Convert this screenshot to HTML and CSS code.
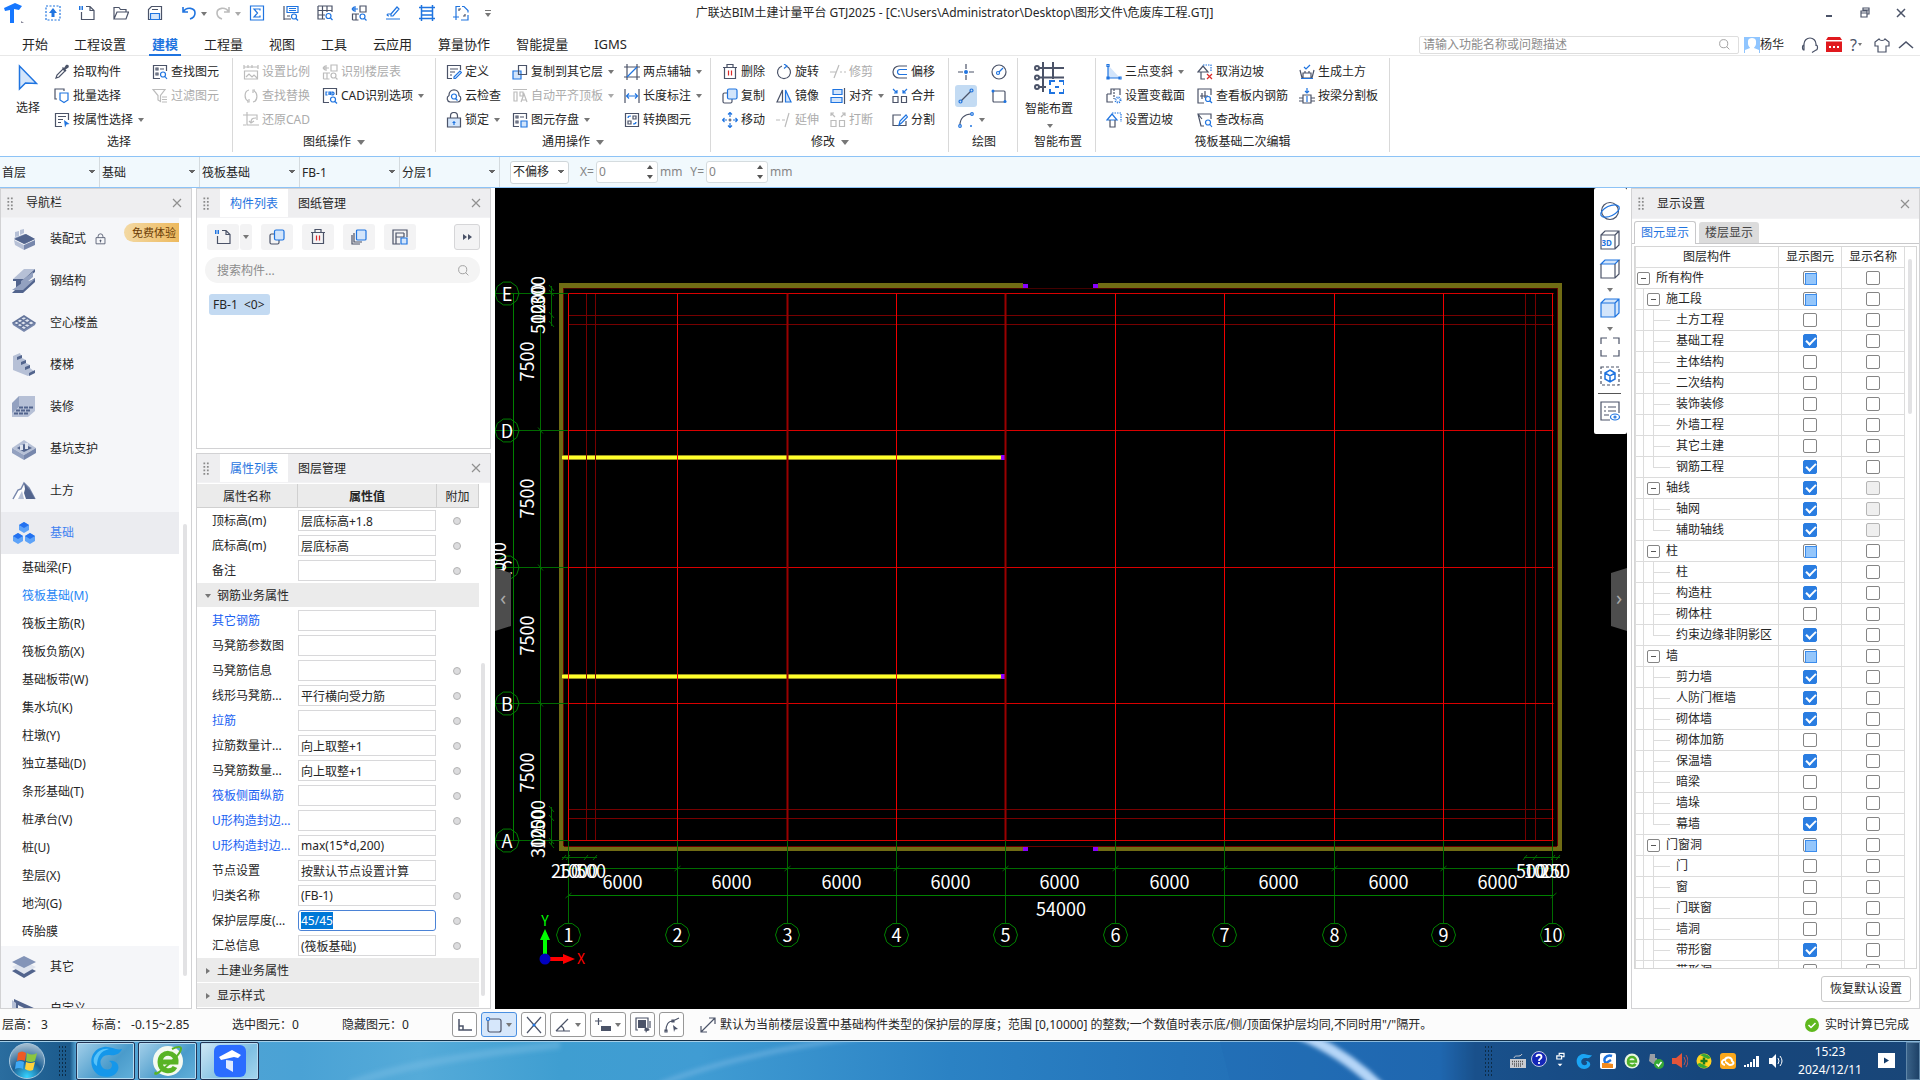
FILE: index.html
```html
<!DOCTYPE html>
<html lang="zh-CN">
<head>
<meta charset="utf-8">
<title>广联达BIM土建计量平台 GTJ2025</title>
<link rel="stylesheet" href="styles.css">
</head>
<body>
<svg class="sprite" aria-hidden="true">
  <symbol id="up" viewBox="0 0 16 16"><path class="b" stroke-dasharray="2 1.5" d="M1 1h14v14H1z"/><path class="bs" d="M8 3l4 5h-2.500v4h-3V8H4z"/></symbol>
  <symbol id="new" viewBox="0 0 16 16"><path d="M7 1.500h4l4 4v9H2.500V7M11 1.500v4h4"/><path class="b" stroke-dasharray="1.500 1" stroke-width="4" d="M0 3h5"/></symbol>
  <symbol id="open" viewBox="0 0 16 16"><path d="M1 14V2.500h5l1.500 2H13V7M1 14l3-7h11.500L13 14z"/></symbol>
  <symbol id="save" viewBox="0 0 16 16"><path d="M1.500 14.500v-10l3-3h10v13zM5 4.500h6"/><path class="bf" d="M3.500 14.500v-6h9v6z"/></symbol>
  <symbol id="undo" viewBox="0 0 16 16"><path class="b" stroke-width="1.600" d="M2 2v5h5M2 7c4-6 12-4 12 1 0 3-2 5-5 6"/></symbol>
  <symbol id="redo" viewBox="0 0 16 16"><path class="b" stroke-width="1.600" d="M14 2v5H9M14 7C10 1 2 3 2 8c0 3 2 5 5 6"/></symbol>
  <symbol id="sum" viewBox="0 0 16 16"><path class="b" d="M1.500 1h13v14h-13zM11 5.500V4H5l3.500 4L5 12h6v-1.500"/></symbol>
  <symbol id="q1" viewBox="0 0 16 16"><path d="M1 1v14M1 14h7M4 11h3"/><path class="b" d="M4 1.500h11v6H4zM6 3.500h7M6 5.500h7"/><circle class="b" cx="11" cy="11.500" r="2.500"/><path class="b" d="M13 13.500l2 2"/></symbol>
  <symbol id="q2" viewBox="0 0 16 16"><path d="M1 1h14v6M1 1v13h7M1 5.500h14M1 10h7M5.500 1v13M10 1v6"/><circle class="b" cx="11.500" cy="11" r="2.500"/><path class="b" d="M13.500 13l2 2"/></symbol>
  <symbol id="q3" viewBox="0 0 16 16"><path d="M9 1h6v6H9zM1.500 15V9H8M1.500 15h6M5 9v6"/><circle class="b" cx="11.500" cy="11.500" r="2.500"/><path class="b" d="M13.500 13.500l2 2M1 4h6M4 1v6M1 4l2-2M1 4l2 2"/></symbol>
  <symbol id="pen" viewBox="0 0 16 16"><path class="b" d="M6 9l6-7 2 2-6 7H6zM6 9H3c-2 1 0 2 1 2M1 14h14"/></symbol>
  <symbol id="rail" viewBox="0 0 16 16"><path class="b" stroke-width="1.500" d="M2.500 0v16M13.500 0v16M0 2.500h16M2.500 6h11M2.500 10h11M0 13.500h16"/></symbol>
  <symbol id="frame" viewBox="0 0 16 16"><path class="b" d="M3 9V1.500h4M9 1.500h2l4 4v2M15 10v5H8M0 12h6M3 9v6"/><path d="M6 6V4h2M12 9v2h-2"/></symbol>
  <symbol id="pick" viewBox="0 0 16 16"><path d="M2 14l1-3 6-6 2 2-6 6z"/><path class="ds" d="M8 4l1-1 1 1 2-3c2-1 3.500.5 2.500 2.500l-3 2 1 1-1 1z"/></symbol>
  <symbol id="batch" viewBox="0 0 16 16"><path d="M3 11H1V1h9v2"/><path class="b" d="M6 5h8v7l-4 2.500L6 12z"/></symbol>
  <symbol id="attr" viewBox="0 0 16 16"><path d="M8 14.500H1.500v-13h13V8M4 4.500h8M4 7.500h5M4 10.500h3"/><path class="bs" d="M10 8l5.500 4-3 .5-1.500 3z"/></symbol>
  <symbol id="find" viewBox="0 0 16 16"><path d="M8 14.500H1.500v-13h13V7M4 4h2v2H4zM8 5h4M4 9h2v2H4z"/><circle class="b" cx="11" cy="10.500" r="2.500"/><path class="b" d="M13 12.500l2 2.500"/></symbol>
  <symbol id="filter" viewBox="0 0 16 16"><path d="M1 1.500h12L8.500 7.500v6L6 12V7.500zM10 9h5M10 11.500h5M10 14h5"/></symbol>
  <symbol id="scale" viewBox="0 0 16 16"><path d="M1 1v4M15 1v4M1 3h14M5 1v3M9 1v3M1.500 7h13v8h-13zM3 13l3-3 3 3 2-2 3 3"/></symbol>
  <symbol id="swap" viewBox="0 0 16 16"><path d="M6 2C1 3 1 11 5 13M4 14h2v-3M10 14c5-1 5-9 1-11M12 2h-2v3"/></symbol>
  <symbol id="restore" viewBox="0 0 16 16"><path d="M4 0v13h12M0 3h14v5M13 6c-4 0-5 1-5 5M6 9l2 2 3-2M0 13h3"/></symbol>
  <symbol id="cad" viewBox="0 0 16 16"><path d="M7 14.500H1.500v-14h13V7"/><path class="b" d="M5.500 4H4v3h1.500M7 7V4h1.500v3M7 6h1.500M10 4v3h1l1-1V5l-1-1z"/><circle class="b" cx="11" cy="11.500" r="2.500"/><path class="b" d="M13 13.500l2 2"/></symbol>
  <symbol id="define" viewBox="0 0 16 16"><path d="M6 14.500H1.500v-13h13V6M4 5h8M4 8h5M4 11h2"/><path class="b" d="M8 13l6-6 1.500 1.500-6 6H8z"/></symbol>
  <symbol id="cloud" viewBox="0 0 16 16"><path d="M4 14a3.500 3.500 0 0 1-1-6.500C3 0 13 0 13 7.500A3.500 3.500 0 0 1 12 14z"/><circle class="b" cx="8" cy="8.500" r="2.500"/><path class="b" d="M9.500 10.500l2 2"/></symbol>
  <symbol id="lock" viewBox="0 0 16 16"><path d="M4.500 6V4a3.500 3.500 0 0 1 7 0v2"/><path class="bf" style="stroke:var(--d)" d="M1.500 6h13v9h-13z"/><path class="b" d="M8 9v4M6.500 10.500h3"/></symbol>
  <symbol id="copyl" viewBox="0 0 16 16"><path class="bf" d="M1 7h8v8H1z"/><path d="M6.500 1.500h8v9h-8z"/></symbol>
  <symbol id="flat" viewBox="0 0 16 16"><path d="M1 1.500h14M2 4h3v9H2zM8 4h3v4H8zM9 14l3-8 3 8M10 12h4"/></symbol>
  <symbol id="store" viewBox="0 0 16 16"><path d="M7 14.500H1.500v-13h13V7M4 4h2v2H4zM8 5h4M4 9h2v2H4z"/><path class="bf" d="M9 9h6v6H9z"/></symbol>
  <symbol id="axis2" viewBox="0 0 16 16"><path d="M3 0v16M0 13h16M13 0v16M0 3h16"/><path class="b" d="M3 13L13 3"/></symbol>
  <symbol id="len" viewBox="0 0 16 16"><path d="M1 1v14M15 1v14"/><path class="b" d="M2 8h12M5 5.500L2.500 8 5 10.500M11 5.500L13.500 8 11 10.500"/></symbol>
  <symbol id="conv" viewBox="0 0 16 16"><path d="M1.500 1.500h13v13h-13zM9 4h3v3H9zM4 9h3v3H4z"/><path class="b" d="M4 6c0-2 1-2 3-2M12 10c0 2-1 2-3 2"/></symbol>
  <symbol id="del" viewBox="0 0 16 16"><path d="M1 3.500h14M5 3.500v-3h6v3M2.500 3.500v11h11v-11"/><path class="r" d="M6.500 6.500v5M9.500 6.500v5"/></symbol>
  <symbol id="rot" viewBox="0 0 16 16"><path d="M6 2a6.500 6.500 0 1 0 4 0"/><path class="b" d="M8 0l3 2-3 2.500"/></symbol>
  <symbol id="trim" viewBox="0 0 16 16"><path d="M0 8h6M4 14L9 1M10 8h2M14 8h2"/></symbol>
  <symbol id="off" viewBox="0 0 16 16"><path d="M15 2H7a6 6 0 0 0 0 12h8"/><path class="b" d="M15 5.500H8a2.500 2.500 0 0 0 0 5h7"/></symbol>
  <symbol id="copy" viewBox="0 0 16 16"><path d="M5 5H2.500Q1 5 1 6.500v7Q1 15 2.500 15h6q1.500 0 1.500-1.500V11"/><rect class="bf" x="5.500" y="1" width="9.500" height="10" rx="1.500"/></symbol>
  <symbol id="mir" viewBox="0 0 16 16"><path d="M6.500 2v12H1z"/><path class="bf" d="M9.500 2v12H15z"/></symbol>
  <symbol id="align" viewBox="0 0 16 16"><path d="M14.500 0v16"/><path class="bf" d="M3 1.500h9v5H3zM1 9.500h11v5H1z"/></symbol>
  <symbol id="merge" viewBox="0 0 16 16"><path d="M1 8.500h5v6H1zM9.500 8.500h5v6h-5z"/><path class="b" d="M1 1l4 4M5 2v3H2M15 1l-4 4M11 2v3h3"/></symbol>
  <symbol id="move" viewBox="0 0 16 16"><path class="b" d="M6 2.500L8 .5l2 2M6 13.500l2 2 2-2M2.500 6L.5 8l2 2M13.500 6l2 2-2 2M8 1v4M8 11v4M1 8h4M11 8h4"/><path d="M6.500 8h3M8 6.500v3"/></symbol>
  <symbol id="ext" viewBox="0 0 16 16"><path d="M0 8h4M6 8h3M9 15l4-14"/></symbol>
  <symbol id="brk" viewBox="0 0 16 16"><path d="M1 8.500h5v6H1zM9.500 8.500h5v6h-5zM5 5L1 1M1 4V1h3M11 5l4-4M15 4V1h-3"/></symbol>
  <symbol id="split" viewBox="0 0 16 16"><path d="M9 3H1v10.500h13V9"/><path class="b" d="M7 13l1-4 6-6 1.500 2-6 6z"/></symbol>
  <symbol id="pt" viewBox="0 0 16 16"><path d="M8 0v5M8 11v5M0 8h5M11 8h5"/><circle class="bs" cx="8" cy="8" r="2"/></symbol>
  <symbol id="circ" viewBox="0 0 16 16"><circle cx="8" cy="8" r="7"/><circle class="b" cx="7" cy="9" r="1.500"/><path class="b" d="M8 8l4-4"/></symbol>
  <symbol id="line" viewBox="0 0 16 16"><path d="M3 13L13 3"/><circle class="b" cx="2.500" cy="13.500" r="1.500"/><circle class="b" cx="13.500" cy="2.500" r="1.500"/></symbol>
  <symbol id="rect" viewBox="0 0 16 16"><rect x="2" y="3" width="12" height="11" rx="1"/><circle class="bs" cx="2" cy="3" r="1.500"/><circle class="bs" cx="14" cy="13.500" r="1.500"/></symbol>
  <symbol id="arc" viewBox="0 0 16 16"><path d="M2 13C2 6 7 2 13 2"/><circle class="b" cx="2" cy="14" r="1.300"/><circle class="b" cx="14" cy="2" r="1.300"/><circle class="bs" cx="13" cy="14" r="1"/></symbol>
  <symbol id="smart" viewBox="0 0 30 32"><g stroke-width="2"><circle cx="3" cy="6" r="2"/><circle cx="3" cy="15.500" r="2"/><circle cx="3" cy="25" r="2"/><path d="M5 6h25M5 15.500h25M5 25h7M9 0v30M19 0v17"/></g><path class="b" stroke-width="2" d="M16 23v-4h5M25 19h5v4M30 27v4h-5M21 31h-5v-4M21 25h4"/></symbol>
  <symbol id="tri" viewBox="0 0 16 16"><path class="bf" style="stroke:none" d="M2 1l12 13H2z"/><path class="b" d="M2 2v12h12M1 .5h2v2H1zM1 13h2v2H1zM13 13h2v2h-2z"/></symbol>
  <symbol id="sect" viewBox="0 0 16 16"><path d="M1 6h4V1h9v6M1 6v8h6"/><path stroke-dasharray="2 1" d="M8 1v10"/><circle class="b" cx="12" cy="12" r="2.500" stroke-dasharray="1 1" stroke-width="2"/></symbol>
  <symbol id="slope" viewBox="0 0 16 16"><path class="b" d="M1 8l5-6 5 6z"/><path class="b" stroke-dasharray="1.500 1" d="M6 1h9v9"/><path d="M4 8v7h5V8"/></symbol>
  <symbol id="unslope" viewBox="0 0 16 16"><path d="M1 8l5-6 5 6zM4 8v7h4"/><path class="b" stroke-dasharray="1.500 1" d="M6 1h8v7"/><path class="r" d="M10 10l5 5M15 10l-5 5"/></symbol>
  <symbol id="rebar" viewBox="0 0 16 16"><path d="M7 15H1V1h13v6M3 8h8M8 3v7M5 5v6"/><circle class="b" cx="11" cy="11" r="2.500"/><path class="b" d="M13 13l2 2"/></symbol>
  <symbol id="elev" viewBox="0 0 16 16"><path d="M7 14H4l-3-12h13v5M1 2l4 5"/><circle class="b" cx="11" cy="10.500" r="2.500"/><path class="b" d="M13 12.500l2 2.500"/></symbol>
  <symbol id="earth" viewBox="0 0 16 16"><path d="M1 6l2 8h10l2-8M4 14V9h8v5M6 9V7M10 9V7"/><path class="b" d="M5 3l2 2 4-4M2 14.500h12"/></symbol>
  <symbol id="beam" viewBox="0 0 16 16"><path d="M4 7h8v8H4zM0 10h4M12 10h4M0 13h4M12 13h4"/><path class="b" d="M8 0v5M6 3l2 2 2-2M8 8v6"/></symbol>
  <symbol id="mag" viewBox="0 0 16 16"><circle cx="7" cy="7" r="5"/><path d="M10.500 10.500L14 14"/></symbol>
  <symbol id="layers" viewBox="0 0 16 16"><path d="M3 4v9h8M1 6v9h8"/><rect class="bf" x="5.500" y="1" width="9.500" height="10" rx="1"/></symbol>
  <symbol id="sv" viewBox="0 0 16 16"><path d="M8 15H1V1h14v7M4 15V4h8M4 8h8V4"/><path class="bf" d="M9 9h6v6H9z"/></symbol>
  <symbol id="x" viewBox="0 0 16 16"><path d="M4 4l8 8M12 4l-8 8"/></symbol>
  <symbol id="grip" viewBox="0 0 8 16"><path stroke-width="2" stroke-dasharray="2 2" d="M1.500 1v15M5.500 1v15"/></symbol>
  <symbol id="cube" viewBox="0 0 20 20"><path d="M1 5l4-4h14v14l-4 4H1zM1 5h14v14M15 5l4-4"/></symbol>
</svg>

<header class="title">
  <svg class="logo" viewBox="0 0 20 20"><path fill="#1677ff" d="M0 5l11-5 7 3-3 4-5-1v14H6V7L1 8z"/><path fill="#889" d="M17 18l3 2h-3z"/></svg>
  <div class="quick">
    <button aria-label="上传"><svg class="i"><use href="#up"/></svg></button>
    <button aria-label="新建"><svg class="i"><use href="#new"/></svg></button>
    <button aria-label="打开"><svg class="i"><use href="#open"/></svg></button>
    <button aria-label="保存"><svg class="i"><use href="#save"/></svg></button>
    <button aria-label="撤销"><svg class="i"><use href="#undo"/></svg><i class="car"></i></button>
    <button aria-label="恢复" class="dis"><svg class="i"><use href="#redo"/></svg><i class="car"></i></button>
    <button aria-label="汇总"><svg class="i"><use href="#sum"/></svg></button>
    <button aria-label="查量"><svg class="i"><use href="#q1"/></svg></button>
    <button aria-label="查表"><svg class="i"><use href="#q2"/></svg></button>
    <button aria-label="查工程量"><svg class="i"><use href="#q3"/></svg></button>
    <button aria-label="编辑"><svg class="i"><use href="#pen"/></svg></button>
    <button aria-label="钢筋三维"><svg class="i"><use href="#rail"/></svg></button>
    <button aria-label="框选"><svg class="i"><use href="#frame"/></svg></button>
    <button aria-label="更多" class="over"><i class="bar"></i><i class="car"></i></button>
  </div>
  <h1>广联达BIM土建计量平台 GTJ2025 - [C:\Users\Administrator\Desktop\图形文件\危废库工程.GTJ]</h1>
  <div class="win">
    <button aria-label="最小化"><svg class="i" viewBox="0 0 16 16"><path stroke-width="2" d="M5 11h6"/></svg></button>
    <button aria-label="还原"><svg class="i" viewBox="0 0 16 16"><path d="M4 6h6v6H4zM4 8h6M6 6V3h6v6h-2M6 5h6"/></svg></button>
    <button aria-label="关闭"><svg class="i" viewBox="0 0 16 16"><path stroke-width="1.500" d="M4 4l8 8M12 4l-8 8"/></svg></button>
  </div>
</header>

<nav class="tabs">
  <a href="#">开始</a><a href="#">工程设置</a><a href="#" class="on">建模</a><a href="#">工程量</a><a href="#">视图</a><a href="#">工具</a><a href="#">云应用</a><a href="#">算量协作</a><a href="#">智能提量</a><a href="#">IGMS</a>
  <div class="account">
    <div class="search"><input type="text" aria-label="搜索功能" placeholder="请输入功能名称或问题描述"><svg class="i dim"><use href="#mag"/></svg></div>
    <svg class="avatar" viewBox="0 0 16 16"><path fill="#8fc5ff" d="M0 0h16v16H0z"/><path fill="#fff" d="M4 4c0-4 8-4 8 0v3c0 2-2 3-2 4l5 2v3H1v-3l5-2C6 10 4 9 4 7z"/></svg>
    <span class="user">杨华</span>
    <svg class="i" viewBox="0 0 16 16"><path d="M2 9V7a6 6 0 0 1 12 0v2M2 8c-2 0-2 5 0 5zM14 8c2 0 2 5 0 5l-4 2.500"/></svg>
    <svg class="i" viewBox="0 0 16 16"><path fill="#e0191e" stroke="none" d="M2 0h12l2 3H0zM0 4.500h16V15H0z"/><path stroke="#fff" stroke-width="2" stroke-dasharray="2 2" d="M3 10h10"/></svg>
    <span class="help">?<i class="car"></i></span>
    <svg class="i" viewBox="0 0 16 16"><path d="M5 2L1 5v4h3v6h8V9h3V5l-4-3c-1 2-5 2-6 0z"/></svg>
    <svg class="i" viewBox="0 0 16 16"><path stroke-width="1.600" d="M1 11l7-6 7 6"/></svg>
  </div>
</nav>

<section class="ribbon">
  <div class="grp g1">
    <div class="cmds">
      <button class="big"><svg viewBox="0 0 20 28"><path class="bf" stroke-width="1.500" d="M1.500 2v23l6-6 11 .500z"/></svg>选择</button>
      <button><svg class="i"><use href="#pick"/></svg>拾取构件</button>
      <button><svg class="i"><use href="#batch"/></svg>批量选择</button>
      <button><svg class="i"><use href="#attr"/></svg>按属性选择<i class="car"></i></button>
      <button><svg class="i"><use href="#find"/></svg>查找图元</button>
      <button class="dis"><svg class="i"><use href="#filter"/></svg>过滤图元</button>
    </div>
    <div class="cap">选择</div>
  </div>
  <div class="grp g2">
    <div class="cmds">
      <button class="dis"><svg class="i"><use href="#scale"/></svg>设置比例</button>
      <button class="dis"><svg class="i"><use href="#swap"/></svg>查找替换</button>
      <button class="dis"><svg class="i"><use href="#restore"/></svg>还原CAD</button>
      <button class="dis"><svg class="i"><use href="#q3"/></svg>识别楼层表</button>
      <button><svg class="i"><use href="#cad"/></svg>CAD识别选项<i class="car"></i></button>
    </div>
    <div class="cap">图纸操作<i class="car"></i></div>
  </div>
  <div class="grp g3">
    <div class="cmds">
      <button><svg class="i"><use href="#define"/></svg>定义</button>
      <button><svg class="i"><use href="#cloud"/></svg>云检查</button>
      <button><svg class="i"><use href="#lock"/></svg>锁定<i class="car"></i></button>
      <button><svg class="i"><use href="#copyl"/></svg>复制到其它层<i class="car"></i></button>
      <button class="dis"><svg class="i"><use href="#flat"/></svg>自动平齐顶板<i class="car"></i></button>
      <button><svg class="i"><use href="#store"/></svg>图元存盘<i class="car"></i></button>
      <button><svg class="i"><use href="#axis2"/></svg>两点辅轴<i class="car"></i></button>
      <button><svg class="i"><use href="#len"/></svg>长度标注<i class="car"></i></button>
      <button><svg class="i"><use href="#conv"/></svg>转换图元</button>
    </div>
    <div class="cap">通用操作<i class="car"></i></div>
  </div>
  <div class="grp g4">
    <div class="cmds">
      <button><svg class="i"><use href="#del"/></svg>删除</button>
      <button><svg class="i"><use href="#copy"/></svg>复制</button>
      <button><svg class="i"><use href="#move"/></svg>移动</button>
      <button><svg class="i"><use href="#rot"/></svg>旋转</button>
      <button><svg class="i"><use href="#mir"/></svg>镜像</button>
      <button class="dis"><svg class="i"><use href="#ext"/></svg>延伸</button>
      <button class="dis"><svg class="i"><use href="#trim"/></svg>修剪</button>
      <button><svg class="i"><use href="#align"/></svg>对齐<i class="car"></i></button>
      <button class="dis"><svg class="i"><use href="#brk"/></svg>打断</button>
      <button><svg class="i"><use href="#off"/></svg>偏移</button>
      <button><svg class="i"><use href="#merge"/></svg>合并</button>
      <button><svg class="i"><use href="#split"/></svg>分割</button>
    </div>
    <div class="cap">修改<i class="car"></i></div>
  </div>
  <div class="grp g5">
    <div class="cmds">
      <button aria-label="点"><svg class="i"><use href="#pt"/></svg></button>
      <button aria-label="直线" class="sel"><svg class="i"><use href="#line"/></svg></button>
      <button aria-label="弧"><svg class="i"><use href="#arc"/></svg><i class="car"></i></button>
      <button aria-label="圆"><svg class="i"><use href="#circ"/></svg></button>
      <button aria-label="矩形"><svg class="i"><use href="#rect"/></svg></button>
    </div>
    <div class="cap">绘图</div>
  </div>
  <div class="grp g6">
    <div class="cmds"><button class="big"><svg class="i"><use href="#smart"/></svg>智能布置<i class="car"></i></button></div>
    <div class="cap">智能布置</div>
  </div>
  <div class="grp g7">
    <div class="cmds">
      <button><svg class="i"><use href="#tri"/></svg>三点变斜<i class="car"></i></button>
      <button><svg class="i"><use href="#sect"/></svg>设置变截面</button>
      <button><svg class="i"><use href="#slope"/></svg>设置边坡</button>
      <button><svg class="i"><use href="#unslope"/></svg>取消边坡</button>
      <button><svg class="i"><use href="#rebar"/></svg>查看板内钢筋</button>
      <button><svg class="i"><use href="#elev"/></svg>查改标高</button>
      <button><svg class="i"><use href="#earth"/></svg>生成土方</button>
      <button><svg class="i"><use href="#beam"/></svg>按梁分割板</button>
    </div>
    <div class="cap">筏板基础二次编辑</div>
  </div>
</section>

<section class="opts">
  <select aria-label="楼层"><option>首层</option></select>
  <select aria-label="构件大类"><option>基础</option></select>
  <select aria-label="构件类型"><option>筏板基础</option></select>
  <select aria-label="构件"><option>FB-1</option></select>
  <select aria-label="分层"><option>分层1</option></select>
  <select aria-label="偏移方式" class="box"><option>不偏移</option></select>
  <label class="num">X=<span><input type="text" value="0" disabled><i class="spin"></i></span>mm</label>
  <label class="num">Y=<span><input type="text" value="0" disabled><i class="spin"></i></span>mm</label>
</section>

<main class="work">
  <aside class="panel navp">
    <div class="head"><svg class="grip"><use href="#grip"/></svg><h2>导航栏</h2><button class="cls" aria-label="关闭导航栏"><svg class="i"><use href="#x"/></svg></button></div>
    <div class="navbody">
      <div class="navlist">
        <a href="#" class="cat"><svg viewBox="0 0 24 24"><path fill="#93a1c0" d="M2 11l11-4 10 5-10 5z"/><path fill="#52648d" d="M2 12l12-5 9 5-11 5z"/><path fill="#b6c0d6" d="M2 13l10 5v5L3 18zM3 5l4-1v5l-4 1zM8 3l4-1v4L8 8z"/><path fill="#7787ac" d="M12 18l11-5v5l-11 5z"/></svg>装配式<svg class="i lk"><use href="#lock"/></svg><span class="free">免费体验</span></a>
        <a href="#" class="cat"><svg viewBox="0 0 24 24"><path fill="#b6c0d6" d="M1 10L12 0h11L12 10z"/><path fill="#52648d" d="M1 10h11L23 0v3L12 12H9v6l14-9v4L11 24H0l4-4V12H1z"/><path fill="#93a1c0" d="M9 12l12-9v5L9 18zM0 21l10-7 13-4-12 11z"/></svg>钢结构</a>
        <a href="#" class="cat"><svg viewBox="0 0 24 24"><path fill="#dfe4ee" stroke="#63749b" stroke-width="1.500" d="M1 12l11-7 11 7-11 7zM4.500 14.200l11-7M8 16.500l11-7M4.500 9.800l11 7M8 7.500l11 7"/><path stroke="#7787ac" stroke-width="1.500" fill="none" d="M1 13l11 7 11-7"/></svg>空心楼盖</a>
        <a href="#" class="cat"><svg viewBox="0 0 24 24"><path fill="#b6c0d6" d="M1 3l7-3 2 5 4 2v3l4 2v3l5 4-7 4L1 17z"/><path fill="#52648d" d="M5 4l5-2v3L5 7zM9 9l5-2v3L9 12zM13 14l5-2v3l-5 2zM17 20l6-3v3l-6 3z"/></svg>楼梯</a>
        <a href="#" class="cat"><svg viewBox="0 0 24 24"><path fill="#b6c0d6" d="M7 1h16v11H7z"/><path fill="#93a1c0" d="M7 1v11L0 19V8z"/><path fill="#b6c0d6" d="M7 12h16v4l-7 6H0v-4z"/><path stroke="#52648d" stroke-width="2" stroke-dasharray="4 1" d="M7 12.500h15M4 15.500h15M2 18.500h15"/></svg>装修</a>
        <a href="#" class="cat"><svg viewBox="0 0 24 24"><path fill="#b6c0d6" d="M0 11l12-8 12 8-12 7z"/><path fill="#93a1c0" d="M0 11l12 7v5L0 16z"/><path fill="#7787ac" d="M24 11l-12 7v5l12-7z"/><path fill="#52648d" d="M5 11l7-4 8 4-8 4z"/><path fill="#dfe4ee" d="M8 8h3v5H8zM13 6h3v6h-3z"/></svg>基坑支护</a>
        <a href="#" class="cat"><svg viewBox="0 0 24 24"><path fill="#fff" stroke="#7787ac" stroke-width="1.500" d="M1 20l5-9 3-1 3-6 5 5 6 11"/><path fill="#52648d" d="M12 4l6 7 5 9h-9l-2-6 1-4z"/><path fill="#b6c0d6" d="M6 20l4-8 2 8z"/></svg>土方</a>
        <a href="#" class="cat on"><svg viewBox="0 0 24 24"><g fill="#5ea3f8"><path d="M7 4l5-3 5 3v5l-5 3-5-3zM1 15l5-3 5 3v5l-5 3-5-3zM13 15l5-3 5 3v5l-5 3-5-3z"/></g><path fill="#2472f0" d="M7 4l5-3 5 3-5 3zM1 15l5-3 5 3-5 3zM13 15l5-3 5 3-5 3z"/></svg>基础</a>
        <div class="subs">
          <a href="#">基础梁(F)</a><a href="#" class="on">筏板基础(M)</a><a href="#">筏板主筋(R)</a><a href="#">筏板负筋(X)</a><a href="#">基础板带(W)</a><a href="#">集水坑(K)</a><a href="#">柱墩(Y)</a><a href="#">独立基础(D)</a><a href="#">条形基础(T)</a><a href="#">桩承台(V)</a><a href="#">桩(U)</a><a href="#">垫层(X)</a><a href="#">地沟(G)</a><a href="#">砖胎膜</a>
        </div>
        <a href="#" class="cat"><svg viewBox="0 0 24 24"><path fill="#52648d" d="M0 16l12-6 12 6-12 7z"/><path fill="#dfe4ee" d="M0 12l12-6 12 6-12 7z"/><path fill="#8394b8" d="M0 7l12-6 12 6-12 6z"/></svg>其它</a>
        <a href="#" class="cat"><svg viewBox="0 0 24 24"><path fill="#52648d" d="M2 2l22 10v3L6 23H2zM6 8v10l10-5z" fill-rule="evenodd"/><path fill="#b6c0d6" d="M0 3l4 3v14l-4 3z"/></svg>自定义</a>
      </div>
      <i class="thumb t1"></i>
    </div>
  </aside>

  <div class="mid">
    <section class="panel comp">
      <div class="head"><svg class="grip"><use href="#grip"/></svg><button class="tab on">构件列表</button><button class="tab">图纸管理</button><button class="cls" aria-label="关闭构件列表"><svg class="i"><use href="#x"/></svg></button></div>
      <div class="tools">
        <span class="duo"><button aria-label="新建构件"><svg class="i"><use href="#new"/></svg></button><button aria-label="新建选项" class="nar"><i class="car"></i></button></span>
        <button aria-label="复制构件"><svg class="i"><use href="#copy"/></svg></button>
        <button aria-label="删除构件"><svg class="i"><use href="#del"/></svg></button>
        <button aria-label="层间复制"><svg class="i"><use href="#layers"/></svg></button>
        <button aria-label="存档"><svg class="i"><use href="#sv"/></svg></button>
        <button aria-label="更多" class="mr"><svg class="i" viewBox="0 0 16 16"><path class="ds" d="M4 5l4 3-4 3zM9 5l4 3-4 3z"/></svg></button>
      </div>
      <div class="pill"><input type="text" aria-label="搜索构件" placeholder="搜索构件..."><svg class="i dim"><use href="#mag"/></svg></div>
      <button class="tag">FB-1  &lt;0&gt;</button>
    </section>
    <section class="panel prop">
      <div class="head"><svg class="grip"><use href="#grip"/></svg><button class="tab on">属性列表</button><button class="tab">图层管理</button><button class="cls" aria-label="关闭属性列表"><svg class="i"><use href="#x"/></svg></button></div>
      <div class="propbody">
        <table class="ptab"><thead><tr><th>属性名称</th><th><b>属性值</b></th><th>附加</th></tr></thead><tbody id="props"></tbody></table>
        <i class="thumb t2"></i>
      </div>
    </section>
  </div>

  <section class="canvas">
    <svg class="plan" viewBox="495 188 1132 821" role="img" aria-label="筏板基础平面图">
      <g id="plan"></g>
      <g class="ucs">
        <path fill="#0f0" d="M543 955v-15h-3l5-11 5 11h-3v15z"/>
        <path fill="#f00" d="M549 957h14v-3l12 5-12 5v-3h-14z"/>
        <circle cx="545" cy="959" r="5.500" fill="#0000c0"/>
        <text x="545" y="926">Y</text><text x="581" y="964">X</text>
      </g>
    </svg>
    <button class="hdl l" aria-label="收起左侧">‹</button>
    <button class="hdl r" aria-label="收起右侧">›</button>
    <div class="vtools">
      <button aria-label="动态观察"><svg class="i" viewBox="0 0 20 20"><circle cx="10" cy="10" r="8.500"/><ellipse class="b" cx="10" cy="10" rx="10" ry="5" transform="rotate(-25 10 10)"/></svg></button>
      <button aria-label="三维"><svg class="i"><use href="#cube"/></svg><b>3D</b></button>
      <button aria-label="俯视"><svg class="i" viewBox="0 0 20 20"><path class="bf" d="M1 5l4-4h14l-4 4z"/><path d="M1 5v14h14l4-4V1M15 5v14"/></svg><i class="car"></i></button>
      <button aria-label="实体"><svg class="i" viewBox="0 0 20 20"><path class="bf" d="M1 5l4-4h14v14l-4 4H1zM1 5h14v14M15 5l4-4"/></svg><i class="car"></i></button>
      <button aria-label="全屏"><svg class="i" viewBox="0 0 20 20"><path d="M1 7V1h6M13 1h6v6M19 13v6h-6M7 19H1v-6"/></svg></button>
      <button aria-label="局部三维"><svg class="i" viewBox="0 0 20 20"><path stroke-dasharray="3 2" d="M1 1h18v18H1z"/><path class="b" stroke-width="1.500" d="M10 4l5 3v6l-5 3-5-3V7zM5 7l5 3 5-3M10 10v6"/></svg></button>
      <hr>
      <button aria-label="显示设置"><svg class="i" viewBox="0 0 20 20"><path d="M10 19H1V1h18v11M4 6h2M8 6h8M4 10h2M8 10h8M4 14h5"/><ellipse class="b" cx="15" cy="16" rx="4.500" ry="3"/><circle class="b" cx="15" cy="16" r="1"/></svg></button>
    </div>
  </section>

  <aside class="panel disp">
    <div class="head"><svg class="grip"><use href="#grip"/></svg><h2>显示设置</h2><button class="cls" aria-label="关闭显示设置"><svg class="i"><use href="#x"/></svg></button></div>
    <div class="dtabs"><button class="on">图元显示</button><button>楼层显示</button></div>
    <div class="treebox">
      <table class="tree"><thead><tr><th>图层构件</th><th>显示图元</th><th>显示名称</th></tr></thead><tbody id="tree"></tbody></table>
      <i class="thumb t3"></i>
    </div>
    <div class="foot"><button>恢复默认设置</button></div>
  </aside>
</main>

<footer class="status">
  <span class="s1">层高： 3</span><span class="s2">标高： -0.15~2.85</span><span class="s3">选中图元：0</span><span class="s4">隐藏图元：0</span>
  <div class="snaps">
    <button aria-label="正交"><svg class="i" viewBox="0 0 16 16"><path stroke-width="1.500" d="M2 2v11h13M2 9h4v4"/></svg></button>
    <button aria-label="对象捕捉" class="w sel"><svg class="i" viewBox="0 0 16 16"><rect x="2" y="2" width="13" height="13" rx="2"/><circle class="b" cx="2" cy="2" r="1.500" fill="#fff"/></svg><i class="car"></i></button>
    <button aria-label="交点"><svg class="i" viewBox="0 0 16 16"><path d="M1 0l14 16M15 0L1 16"/><circle class="bs" cx="8" cy="8" r="1.500"/></svg></button>
    <button aria-label="角度" class="w"><svg class="i" viewBox="0 0 16 16"><path d="M1 14L13 2M1 14h14M6 9c2 1 3 3 3 5"/></svg><i class="car"></i></button>
    <button aria-label="偏移输入" class="w"><svg class="i" viewBox="0 0 16 16"><path d="M0 4h7M3.500 1v7"/><path class="ds" d="M6 9h10v5H6z"/></svg><i class="car"></i></button>
    <button aria-label="选择预览"><svg class="i" viewBox="0 0 16 16"><path d="M3 13H1V1h12v12H9M15 4v7"/><path class="ds" d="M3 3h8v8H3zM9 9l6 4-3 1-1 2z"/></svg></button>
    <button aria-label="折线"><svg class="i" viewBox="0 0 16 16"><path d="M2 14C2 8 4 4 9 4l6-3M1 13h2v2H1zM8 3h2v2H8z"/><path class="ds" d="M9 8l5 4-3 .5L10 15z"/></svg></button>
  </div>
  <p><svg class="i" viewBox="0 0 16 16"><path d="M1 15L15 1M9 1h6v6M1 9v6h6"/></svg>默认为当前楼层设置中基础构件类型的保护层的厚度；范围 [0,10000] 的整数;一个数值时表示底/侧/顶面保护层均同,不同时用"/"隔开。</p>
  <span class="done"><svg viewBox="0 0 14 14"><circle cx="7" cy="7" r="7" fill="#5fb81e"/><path fill="none" stroke="#fff" stroke-width="1.500" d="M3.500 7l2.500 2.500L10.500 5"/></svg>实时计算已完成</span>
</footer>

<footer class="task">
  <svg class="sky" viewBox="0 0 1920 40" preserveAspectRatio="none"><defs><filter id="bl" x="-10%" y="-50%" width="120%" height="200%"><feGaussianBlur stdDeviation="2"/></filter></defs><path fill="#1c64b0" fill-opacity=".2" d="M1220 0h700v40h-690z"/><g filter="url(#bl)" fill="none"><path stroke="#b5d6f8" stroke-width="11" d="M1298-8Q1345 12 1380 48"/><path stroke="#7fbce8" stroke-opacity=".5" stroke-width="5" d="M660 44Q740 12 860-4"/><path stroke="#7fc0e6" stroke-opacity=".4" stroke-width="8" d="M350 44Q420 18 560 4"/></g></svg>
  <button class="orb" aria-label="开始"><svg viewBox="0 0 38 38"><defs><radialGradient id="o" cx=".5" cy=".95" r=".9"><stop offset="0" stop-color="#35d4ff"/><stop offset=".5" stop-color="#1c5f94"/><stop offset="1" stop-color="#9db8cc"/></radialGradient></defs><circle cx="19" cy="19" r="17.500" fill="url(#o)" stroke="#a9c8de"/><path fill="#ee5a24" d="M10 11q4-3 8 0l-1 8q-4-2-8 0z"/><path fill="#8cc63f" d="M19 11q5 3 10 0l-2 8q-4 2-9 0z"/><path fill="#3fa9f5" d="M8 20q4-2 8 0l-1 7q-4-2-8 0z"/><path fill="#ffd23b" d="M18 20q4 2 9 0l-2 8q-4 2-8-1z"/></svg></button>
  <i class="dots"></i>
  <button class="app" aria-label="浏览器 G"><svg viewBox="0 0 32 32"><path fill="#1597ea" d="M32 4c-2 5-7 7-12 6-7-1-11 5-9 10 2 6 11 6 11 0 0-2-1-3-3-4 6-1 11 3 9 9-3 8-16 9-22 3C-2 20 0 4 14 2c6-1 13 4 18 2z"/><path fill="#58c3fa" d="M4 13C7 6 13 3 19 4 11 6 7 11 7 21c-3-2-4-4-3-8z"/></svg></button>
  <button class="app" aria-label="浏览器 e"><svg viewBox="0 0 32 32"><circle cx="16" cy="16" r="15" fill="#f4f9f1"/><path fill="none" stroke="#58b325" stroke-width="5" d="M7 17h17c1-11-16-12-16 0 0 10 12 11 15 5"/><path fill="none" stroke="#58b325" stroke-width="2" d="M4 27C-2 36 30 10 29 3c-1-3-9 1-9 1"/></svg></button>
  <button class="app cur" aria-label="广联达"><svg viewBox="0 0 32 32"><rect width="32" height="32" rx="6" fill="#2b6cff"/><path fill="#fff" d="M5 12l13-7 9 5-3 3-4-1-13 3z"/><path fill="#dfe9ff" d="M12 15l7 1v11l-7-4z"/></svg></button>
  <div class="tray">
    <i class="dots"></i>
    <svg viewBox="0 0 16 16"><path fill="#c9cbd0" d="M0 6h16v9H0z"/><path stroke="#555" stroke-dasharray="1 1" stroke-width="1.500" d="M2 8.500h12M2 11h12M4 13h8"/><path fill="none" stroke="#c9cbd0" d="M4 5c1-4 6 0 8-4"/></svg>
    <svg class="up" viewBox="0 0 16 16"><circle cx="8" cy="8" r="7.500" fill="#1426b8" stroke="#c5cbe0"/><path fill="none" stroke="#fff" stroke-width="1.800" d="M5.500 6c0-3 5-3 5 0 0 2-2.500 1.500-2.500 4M8 11v2"/></svg>
    <svg class="up" viewBox="0 0 16 20"><path fill="none" stroke="#fff" stroke-width="1.500" d="M4 6h6v4H4zM7 5V3h6v4h-2"/><path fill="#fff" d="M5 16h6l-3 3z"/></svg>
    <svg viewBox="0 0 32 32"><path fill="#1ba5f5" d="M32 4c-2 5-7 7-12 6-7-1-11 5-9 10 2 6 11 6 11 0 0-2-1-3-3-4 6-1 11 3 9 9-3 8-16 9-22 3C-2 20 0 4 14 2c6-1 13 4 18 2z"/></svg>
    <svg viewBox="0 0 16 16"><rect width="16" height="16" rx="2" fill="#fff"/><path fill="none" stroke="#1f74e0" stroke-width="2.500" d="M12 3C6 1 2 7 6 10l5-3"/><path fill="#f28a1d" d="M2 10h5l6 1v4H2z"/></svg>
    <svg viewBox="0 0 16 16"><circle cx="8" cy="8" r="7.500" fill="#e8f5e0"/><path fill="none" stroke="#4fb12a" stroke-width="2.500" d="M4 8.500h8c0-6-8-6-8 0 0 5 6 5 7.500 2.500"/></svg>
    <svg viewBox="0 0 16 16"><path fill="#9a9ea5" d="M2 1h5v4h2v6H5L1 8z"/><circle cx="11" cy="11" r="5" fill="#36a836"/><path fill="none" stroke="#fff" stroke-width="1.500" d="M8.500 11l2 2 3-4"/></svg>
    <svg viewBox="0 0 16 16"><path fill="#e2553a" d="M0 5h4l6-5v15l-6-4H0z"/><path fill="none" stroke="#b55" d="M12 4q3 4 0 8M14 2q4 6 0 12"/></svg>
    <svg viewBox="0 0 16 16"><circle cx="8" cy="8" r="7.500" fill="#ffd21f"/><path fill="#36a836" d="M4 2Q10-1 15 5L12 6zM12 14Q5 17 1 11l3-1z"/><path stroke="#187a1f" stroke-width="2.500" d="M8 4.500v7M4.500 8h7"/></svg>
    <svg viewBox="0 0 16 16"><rect width="16" height="16" rx="3" fill="#fba81c"/><path fill="none" stroke="#fff" stroke-width="2" d="M5 12c-5-1-3-6 0-5 1-4 7-3 7 1 3 2 1 4-2 4-2 0-3-3-5-3"/></svg>
    <svg viewBox="0 0 16 16"><path fill="#fff" d="M0 12h2v2H0zM3 11h2v3H3zM6 9h2v5H6zM9 6h2v8H9zM12 3h3v11h-3z"/></svg>
    <svg viewBox="0 0 16 16"><path fill="#fff" d="M1 5h3l4-4v14l-4-4H1z"/><path fill="none" stroke="#fff" d="M10 5q2 3 0 6M12 3q4 5 0 10"/></svg>
    <time>15:23<br>2024/12/11</time>
    <svg class="act" viewBox="0 0 17 15"><path fill="#fff" d="M0 0h17v15H0z"/><path fill="#123a68" d="M6 4.500L11 7.500l-5 3z"/></svg>
    <button class="desk" aria-label="显示桌面"></button>
  </div>
</footer>
<script src="app.js"></script>
</body>
</html>
```
FILE: styles.css
```css
* { box-sizing: border-box; }
:root { --d: #4b5368; --b: #1f74e0; --f: #d3e5fb; }
body { margin: 0; height: 100vh; display: flex; flex-direction: column; overflow: hidden; background: #fff; color: #262626; font: 12px/16px "Noto Sans", "Noto Sans CJK SC", sans-serif; }
button, input, select { font: inherit; color: inherit; background: none; border: 0; padding: 0; margin: 0; border-radius: 0; }
input:focus { outline: none; }
h1, h2, p { margin: 0; font-size: 12px; font-weight: 400; }
a { color: inherit; text-decoration: none; }
.sprite { position: absolute; width: 0; height: 0; }
svg { flex: none; display: block; }
.i { width: 16px; height: 16px; fill: none; stroke: var(--d); stroke-width: 1.2; overflow: visible; }
.dim { --d: #a0a0a0; }
.b { stroke: var(--b); }
.bf { stroke: var(--b); fill: var(--f); }
.bs { fill: var(--b); stroke: none; }
.ds { fill: var(--d); stroke: none; }
.r { stroke: #dc2a2a; }
.car { flex: none; width: 0; height: 0; border: 3px solid transparent; border-top: 4px solid #777; border-bottom: 0; }
.dis { --d: #bcbcbc; --b: #bcbcbc; --f: none; color: #acacac; }
.dis .car { border-top-color: #aaa; }

.title { flex: none; height: 26px; display: flex; align-items: center; padding-left: 4px; }
.logo { width: 20px; height: 20px; }
.quick { display: flex; flex: 1 1 0; min-width: 0; margin-left: 12px; }
.quick button { width: 34px; height: 24px; display: flex; align-items: center; justify-content: center; position: relative; }
.quick button .car { position: absolute; right: -1px; top: 11px; }
.quick .over { flex-direction: column; gap: 2px; width: 20px; }
.quick .over .car { position: static; }
.bar { width: 6px; height: 1px; background: #777; }
.title h1 { flex: none; line-height: 24px; }
.win { flex: 1 1 0; margin-left: 36px; display: flex; justify-content: flex-end; gap: 20px; padding-right: 11px; }

.tabs { flex: none; height: 30px; display: flex; gap: 26px; padding-left: 22px; border-bottom: 1px solid #e8e8e8; font-size: 13px; }
.tabs > a { line-height: 36px; height: 30px; }
.tabs .on { color: var(--b); font-weight: 600; box-shadow: inset 0 -2px var(--b); padding: 0 3px; margin: 0 -3px; }
.account { margin-left: auto; display: flex; align-items: center; padding: 8px 6px 0 0; font-size: 12px; gap: 8px; }
.search { width: 320px; height: 18px; border: 1px solid #dedede; border-radius: 2px; display: flex; align-items: center; padding: 0 7px 0 3px; margin-right: -3px; }
.search input { flex: 1; height: 16px; }
::placeholder { color: #8c8c8c; opacity: 1; }
.search .i { width: 13px; height: 13px; }
.avatar { width: 16px; height: 16px; }
.user { margin: 0 10px 0 -8px; }
.help { display: flex; align-items: center; font-size: 16px; color: var(--d); gap: 1px; margin-right: 4px; }
.help .car { border-width: 3px 2px 0; }

.ribbon { flex: none; height: 100px; display: flex; padding-top: 2px; }
.grp { height: 94px; border-right: 1px solid #d9d9d9; padding: 2px 0 0 10px; display: flex; flex-direction: column; }
.cmds { display: grid; grid-auto-flow: column; grid-template-rows: repeat(3, 24px); justify-content: start; }
.cmds button { display: flex; align-items: center; gap: 3px; white-space: nowrap; }
.cmds .car { margin-left: 2px; }
.cmds .big { grid-row: 1 / 4; flex-direction: column; gap: 8px; padding-top: 2px; }
.cap { display: flex; align-items: center; justify-content: center; gap: 6px; height: 24px; margin-left: -10px; }
.cap .car { border-width: 5px 4px 0; }
.g1 { width: 233px; } .g1 .cmds { grid-template-columns: 44px 98px; } .g1 .cap { margin-left: -4px; }
.g1 .big { padding: 4px 8px 0 0; } .g1 .big svg { width: 20px; height: 28px; }
.g2 { width: 203px; } .g2 .cmds { grid-template-columns: 79px; }
.g3 { width: 275px; } .g3 .cmds { grid-template-columns: 66px 112px; }
.g4 { width: 238px; padding-left: 11px; } .g4 .cmds { grid-template-columns: 54px 54px 62px; }
.g5 { width: 69px; padding-left: 6px; } .g5 .cmds { grid-template-columns: 33px; } .g5 .cap { margin-left: -4px; }
.g5 .cmds button { width: 22px; height: 22px; padding: 0 3px; align-self: center; }
.g5 .sel { background: #c3dbf3; border-radius: 3px; }
.g6 { width: 78px; padding-left: 7px; } .g6 .big svg { width: 30px; height: 32px; } .g6 .big { gap: 7px; } .g6 .cap { margin-left: -4px; }
.g7 { width: 294px; } .g7 .cmds { grid-template-columns: 91px 102px; }

.opts { flex: none; height: 32px; display: flex; align-items: center; background: #f1f9fd; border: 1px solid #8dc3f6; border-width: 1px 0; }
select { appearance: none; width: 100px; height: 30px; padding: 2px 0 0 2px; border-right: 1px solid #d3dade; background: linear-gradient(to bottom right, #666 50%, transparent 50%) no-repeat right 4px center / 3px 4px, linear-gradient(to bottom left, #666 50%, transparent 50%) no-repeat right 7px center / 3px 4px; }
select.box { width: 59px; height: 23px; padding-top: 0; border: 1px solid #cfd6da; border-radius: 3px; margin: 0 11px 0 10px; background-position: right 4px center, right 7px center; background-color: #fff; }
.num { display: flex; align-items: center; color: #858585; gap: 2px; margin-right: 8px; }
.num span { width: 62px; height: 22px; border: 1px solid #d5dcdf; border-radius: 3px; background: #fff; display: flex; align-items: center; }
.num input { flex: 1; width: 20px; padding-left: 2px; }
.spin { width: 6px; height: 14px; margin-right: 4px; background: #555; clip-path: polygon(50% 0, 100% 28%, 0 28%, 0 72%, 100% 72%, 50% 100%, 0 72%, 0 28%); }

.work { flex: 1; min-height: 0; display: flex; gap: 4px; }
.panel { border: 1px solid #d2d2d4; background: #fff; display: flex; flex-direction: column; min-height: 0; }
.head { flex: none; height: 29px; background: #eeeef0; display: flex; align-items: center; padding-left: 6px; border-bottom: 1px solid #f2f2f4; }
.grip { width: 7px; height: 15px; stroke: #8a8a8a; margin-right: 12px; }
.cls { margin-left: auto; margin-right: 6px; --d: #909090; }
.tab { height: 28px; width: 68px; padding-top: 1px; }
.tab.on { background: #fff; color: var(--b); }
.head .grip + .tab { margin-left: -2px; }
.thumb { position: absolute; width: 4px; border-radius: 2px; background: #e2e2e4; }

.navp { width: 192px; }
.navbody { flex: 1; min-height: 0; position: relative; overflow: hidden; }
.navlist { width: 178px; background: #f5f6f9; }
.cat { height: 42px; display: flex; align-items: center; padding-left: 11px; gap: 14px; position: relative; }
.cat > svg:first-child { width: 24px; height: 24px; }
.cat .lk { width: 11px; height: 12px; --f: none; --b: var(--d); margin-left: -5px; }
.cat.on { background: #ebecf0; color: #3f82f0; }
.free { position: absolute; right: 0; top: 5px; height: 19px; padding: 0 3px 0 8px; border-radius: 10px 0 0 10px; background: linear-gradient(90deg, #f3d9a4, #edb95e); color: #6b3c05; font-size: 11px; line-height: 19px; }
.subs { background: #fff; display: flex; flex-direction: column; }
.subs a { height: 28px; line-height: 28px; padding-left: 21px; }
.subs .on { color: #1f86f5; }
.t1 { left: 182px; top: 306px; height: 452px; }

.mid { width: 295px; display: flex; flex-direction: column; gap: 4px; }
.comp { flex: 0 0 261px; }
.tools { display: flex; gap: 9px; padding: 6px 10px 7px; }
.tools button { width: 32px; height: 26px; background: #f3f3f4; border-radius: 3px; display: flex; align-items: center; justify-content: center; }
.duo { display: flex; gap: 1px; }
.tools .nar { width: 12px; }
.tools .mr { margin-left: auto; width: 26px; border: 1px solid #d6d6d8; }
.pill { height: 26px; margin: 0 10px 0 8px; border-radius: 13px; background: #f4f4f4; display: flex; align-items: center; padding: 1px 10px 0 12px; }
.pill input { flex: 1; min-width: 0; }
.pill .i { width: 13px; height: 13px; }
.tag { align-self: flex-start; margin: 11px 0 0 12px; height: 21px; padding: 0 5px 0 4px; border-radius: 3px; background: #c3daf2; white-space: pre; }
.prop { flex: 1; }
.propbody { flex: 1; min-height: 0; position: relative; overflow: hidden; padding-top: 1px; }
.t2 { right: 5px; top: 180px; height: 333px; }
table { border-spacing: 0; table-layout: fixed; }
th, td { padding: 0; font-weight: 400; }
.ptab { width: 282px; }
.ptab thead th { height: 24px; padding-top: 2px; background: #ebebeb; border: 1px solid #d0d0d0; border-width: 0 1px 1px 0; }
.ptab thead th:first-child { width: 101px; }
.ptab thead th:last-child { width: 42px; }
.ptab td, .ptab tbody th { height: 25px; }
.ptab tbody th { text-align: left; padding-left: 15px; white-space: nowrap; }
.ptab .blue { color: #1a62f2; }
.ptab td input[type=text] { display: block; width: 138px; height: 21px; border: 1px solid #d8d8da; padding: 0 2px; background: #fff; }
.ptab td input[autofocus] { border: 1px solid #4b83d6; border-radius: 3px; }
::selection { background: #0078d7; color: #fff; }
.ptab input[type=radio] { appearance: none; display: block; width: 8px; height: 8px; border: 1px solid #b4b4b4; border-radius: 50%; background: #dcdcde; margin: 0 0 0 16px; }
.ptab .sec th { padding: 1px 0 0; height: 25px; border-bottom: 1px solid #fff; background: #ebebeb; }
.sec button { display: flex; align-items: center; gap: 6px; padding-left: 8px; }
.sec .rt { border: 3px solid transparent; border-left: 4px solid #777; border-right: 0; margin: 0 1px; }

.canvas { flex: 1; min-width: 0; background: #000; position: relative; overflow: hidden; }
.plan { width: 100%; height: 100%; }
.plan text { font: 18px "Noto Sans CJK SC", sans-serif; fill: #fff; text-anchor: middle; }
.plan .ucs text { font-size: 14px; fill: #0f0; }
.plan .ucs text:last-of-type { fill: #f00; }
.hdl { position: absolute; top: 380px; width: 16px; height: 63px; background: #4d4d4d; color: #aaa; font-size: 20px; line-height: 60px; padding-bottom: 4px; }
.hdl.l { left: 0; clip-path: polygon(0 0, 100% 8%, 100% 92%, 0 100%); }
.hdl.r { right: 0; clip-path: polygon(0 8%, 100% 0, 100% 100%, 0 92%); }
.vtools { position: absolute; right: 0; top: 0; width: 33px; background: #fff; border-radius: 2px; display: flex; flex-direction: column; align-items: center; gap: 9px; padding: 13px 2px 13px 0; }
.vtools .i { width: 20px; height: 20px; }
.vtools button { display: flex; flex-direction: column; align-items: center; gap: 9px; position: relative; }
.vtools .car { margin-bottom: -3px; }
.vtools b { position: absolute; left: 2px; top: 7px; font-size: 8px; line-height: 12px; color: var(--b); }
.vtools hr { width: 23px; height: 1px; border: 0; background: #555; margin: -2px 0; }

.disp { width: 289px; }
.disp .head { height: 30px; }
.dtabs { display: flex; align-items: flex-end; gap: 3px; padding: 2px 2px 0; height: 25px; border-bottom: 1px solid #c8c8ca; }
.dtabs button { width: 60px; height: 21px; background: #dcdcdc; border-radius: 3px 3px 0 0; color: #444; }
.dtabs .on { width: 62px; height: 23px; margin-bottom: -1px; background: #fff; color: var(--b); border: 1px solid #c8c8ca; border-bottom: 0; }
.treebox { flex: 1; min-height: 0; overflow: hidden; position: relative; margin: 2px 2px 0; border: 1px solid #d6d6d6; }
.tree { width: 270px; border-left: 1px solid #dcdcdc; }
.tree th, .tree td { height: 21px; border: 1px solid #dcdcdc; border-width: 0 1px 1px 0; }
.tree thead th:first-child { width: 143px; }
.tree td input { appearance: none; display: block; width: 14px; height: 14px; border: 1px solid #858585; border-radius: 2px; margin: 0 auto; background: #fff; }
.tree td input:disabled { background: #efefef; border-color: #b5b5b5; }
.tree td input:checked { background: #2a7de1; border-color: #2a7de1; }
.tree td input:checked::after { content: ""; display: block; width: 8px; height: 4px; border: solid #fff; border-width: 0 0 2px 2px; transform: rotate(-45deg); margin: 2px 0 0 2px; }
.tree td input:indeterminate::after { content: ""; display: block; width: 10px; height: 10px; margin: 1px; background: #94c6fb; border: 1px solid #3b8cec; }
.tree tbody th div { display: flex; align-items: center; gap: 6px; height: 20px; white-space: nowrap; }
.tree .l0 { padding-left: 1px; }
.tree .l1 { padding-left: 11px; background: linear-gradient(#dcdcdc, #dcdcdc) no-repeat 7px 0 / 1px 100%; }
.tree .l2 { padding-left: 40px; background: linear-gradient(#dcdcdc, #dcdcdc) no-repeat 7px 0 / 1px 100%, linear-gradient(#dcdcdc, #dcdcdc) no-repeat 17px 0 / 1px 100%, linear-gradient(#dcdcdc, #dcdcdc) no-repeat 17px 10px / 17px 1px; }
.tree .l2.last { background-size: 1px 100%, 1px 10px, 17px 1px; }
.tog { width: 13px; height: 13px; border: 1px solid #858585; border-radius: 2px; background: linear-gradient(#555, #555) no-repeat center / 5px 1px #fff; }
.t3 { right: 4px; top: 12px; height: 155px; }
.foot { flex: none; height: 39px; padding: 7px 8px 0; display: flex; justify-content: flex-end; }
.foot button { width: 90px; height: 26px; border: 1px solid #c9c9c9; border-radius: 3px; }

.status { flex: none; height: 31px; background: #fcfcfc; display: flex; align-items: center; padding-right: 11px; padding-left: 2px; white-space: pre; }
.s1 { width: 90px; } .s2 { width: 140px; } .s3 { width: 110px; } .s4 { width: 110px; }
.snaps { display: flex; gap: 4px; }
.snaps button { width: 25px; height: 25px; border: 1px solid #989898; border-radius: 3px; display: flex; align-items: center; justify-content: center; gap: 4px; background: #fff; }
.snaps .w { width: 36px; }
.snaps .sel { background: #d6e7fb; border-color: #4a8fe0; }
.status p { display: flex; align-items: center; gap: 4px; margin-left: 16px; }
.done { margin-left: auto; display: flex; align-items: center; gap: 6px; }
.done svg { width: 14px; height: 14px; }

.task { flex: none; height: 40px; position: relative; display: flex; align-items: center; border-top: 1px solid #16324a; box-shadow: inset 0 1px #a5cfe8; background: linear-gradient(90deg, #2a6d9f 0, #1b5a8c 70px, #55a5d4 76px, #4aa2d5 300px, #55abd9 420px, #3f9ed1 560px, #409cd3 700px, #2b82c4 950px, #2474ba 1180px, #2068b0 1440px, #184c83 1475px, #153f70 1700px, #183f6b 1920px); }
.sky { position: absolute; left: 0; top: 0; width: 100%; height: 100%; }
.task > *:not(.sky) { position: relative; }
.orb { margin-left: 8px; }
.orb svg { width: 38px; height: 38px; }
.dots { width: 9px; height: 31px; margin: 0 9px 0 12px; background: radial-gradient(#0c2c48 1px, transparent 1px) 0 0 / 3px 4px; }
.app { width: 59px; height: 38px; margin-right: 3px; border: 1px solid #235; border-radius: 2px; box-shadow: inset 0 0 0 1px #b5dcf2; background: linear-gradient(135deg, #a3cfe9, #4a9bcb 60%, #62b0da); display: flex; justify-content: center; align-items: center; }
.app.cur { background: linear-gradient(135deg, #cfe7f5, #7fbfe2 60%, #a5d6ee); }
.app svg { width: 32px; height: 32px; }
.tray { margin-left: auto; display: flex; align-items: center; gap: 8px; }
.tray svg { width: 16px; height: 16px; }
.tray .up { margin: -4px 0 0 -3px; }
.tray .dots { margin: 0 9px 0 0; }
.tray time { color: #fff; text-align: center; line-height: 18px; width: 68px; margin: 0 4px; }
.tray .act { width: 17px; height: 15px; margin: 0 1px 0 2px; }
.desk { width: 14px; height: 38px; border: 1px solid #5f86a8; background: linear-gradient(90deg, #3a6288, #1d4167); margin-left: 2px; }
```
FILE: app.js
```js
// 属性列表: [名称, 值, 是否有附加, 是否蓝色]
const props = [
  ['顶标高(m)', '层底标高+1.8', 1], ['底标高(m)', '层底标高', 1], ['备注', '', 1],
  '钢筋业务属性',
  ['其它钢筋', '', 0, 1], ['马凳筋参数图', '', 0], ['马凳筋信息', '', 1], ['线形马凳筋...', '平行横向受力筋', 1],
  ['拉筋', '', 1, 1], ['拉筋数量计...', '向上取整+1', 1], ['马凳筋数量...', '向上取整+1', 1], ['筏板侧面纵筋', '', 1, 1],
  ['U形构造封边...', '', 1, 1], ['U形构造封边...', 'max(15*d,200)', 0, 1], ['节点设置', '按默认节点设置计算', 0],
  ['归类名称', '(FB-1)', 1], ['保护层厚度(...', '45/45', 1], ['汇总信息', '(筏板基础)', 1],
  '土建业务属性', '显示样式'
];
document.getElementById('props').innerHTML = props.map((p, i) => {
  if (typeof p === 'string') {
    return `<tr class="sec"><th colspan="3"><button><i class="car ${i > 3 ? 'rt' : ''}"></i>${p}</button></th></tr>`;
  }
  const focus = p[1] === '45/45' ? 'autofocus' : '';
  const dot = p[2] ? `<input type="radio" aria-label="附加 ${p[0]}">` : '';
  return `<tr><th class="${p[3] ? 'blue' : ''}"><label for="p${i}">${p[0]}</label></th>
    <td><input type="text" id="p${i}" value="${p[1]}" ${focus}></td><td>${dot}</td></tr>`;
}).join('');
const active = document.querySelector('#props [autofocus]');
active.focus();
active.select();

// 图层树: 每项为 层级 + 显示图元状态(p 部分, 1 选中, 0 未选) + 名称
const layers = ('0p所有构件 1p施工段 20土方工程 21基础工程 20主体结构 20二次结构 20装饰装修 20外墙工程 20其它土建 21钢筋工程 ' +
  '11轴线 21轴网 21辅助轴线 1p柱 21柱 21构造柱 20砌体柱 21约束边缘非阴影区 1p墙 21剪力墙 21人防门框墙 21砌体墙 20砌体加筋 ' +
  '21保温墙 20暗梁 20墙垛 21幕墙 1p门窗洞 20门 20窗 20门联窗 20墙洞 21带形窗 20带形洞').split(' ');
document.getElementById('tree').innerHTML = layers.map((s, i) => {
  const level = s[0], name = s.slice(2), next = layers[i + 1];
  const last = level === '2' && next && next[0] !== '2' ? ' last' : '';
  const toggle = level === '2' ? '' : `<button class="tog" aria-label="收起 ${name}"></button>`;
  const locked = i >= 10 && i <= 12 ? 'disabled' : '';
  return `<tr><th class="l${level}${last}"><div>${toggle}${name}</div></th>
    <td><input type="checkbox" class="s${s[1]}" ${s[1] === '1' ? 'checked' : ''} aria-label="显示图元 ${name}"></td>
    <td><input type="checkbox" ${locked} aria-label="显示名称 ${name}"></td></tr>`;
}).join('');
document.querySelectorAll('.sp').forEach(box => { box.indeterminate = true; });

// 平面图: 轴网、尺寸标注与墙体
const out = [];
const line = (x1, y1, x2, y2, c, w = 1) => out.push(`<path d="M${x1} ${y1}L${x2} ${y2}" stroke="${c}" stroke-width="${w}"/>`);
const rect = (x, y, w, h, c) => out.push(`<rect x="${x}" y="${y}" width="${w}" height="${h}" fill="${c}"/>`);
const text = (s, x, y, turn) => out.push(turn
  ? `<text transform="translate(${x + 7} ${y}) rotate(-90)">${s}</text>`
  : `<text x="${x}" y="${y + 7}">${s}</text>`);
const bubble = (x, y, s) => {
  const pts = Array.from({ length: 10 }, (_, k) => {
    const a = (k + 0.5) * Math.PI / 5;
    return `${x + 12 * Math.sin(a)},${y + 12 * Math.cos(a)}`;
  });
  out.push(`<polygon points="${pts.join(' ')}" fill="none" stroke="#008000"/>`);
  text(s, x, y);
};
const G = '#006c00', L = 568.5, R = 1553.5, T = 293.5, B = 840.5;
const xs = Array.from({ length: 10 }, (_, k) => Math.floor(568.3 + k * 109.4) + 0.5);
const ys = [293.5, 430.5, 567.5, 703.5, 840.5];
const OL = '#706c14', DK = '#400';

rect(559, 283, 464, 5, OL); rect(1098, 283, 464, 5, OL);
rect(559, 846, 464, 5, OL); rect(1098, 846, 464, 5, OL);
rect(559, 283, 5, 568, OL); rect(1557, 283, 5, 568, OL);
[[1023, 283], [1093, 283], [1023, 846], [1093, 846]].forEach(p => rect(p[0], p[1] + 1, 5, 4, '#80f'));
line(564, 288.5, 1557, 288.5, DK); line(564, 846.5, 1557, 846.5, '#600');
line(563.5, 288, 563.5, 846, '#600'); line(1557.5, 288, 1557.5, 846, '#600');
[455, 674].forEach(y => { rect(562, y, 439, 5, '#9a9420'); rect(562, y + 1, 439, 3, '#ffff2a'); rect(1001, y, 5, 5, '#80f'); });
[315.5, 324.5, 809.5, 818.5].forEach(y => line(L, y, R, y, '#700'));
[586.5, 595.5, 1525.5, 1535.5].forEach(x => line(x, T, x, B, '#700'));
ys.forEach(y => { line(495, y, L, y, G); line(L, y, R, y, '#d80000'); });
xs.forEach((x, k) => {
  const soft = k === 2 || k === 4;
  line(x, B, x, 923, G);
  line(x, T, x, B, soft ? '#900' : '#f00000', soft ? 2 : 1);
});
line(513.5, T, 513.5, B, '#008000'); line(540.5, T, 540.5, B, G);
line(L, 868.5, R, 868.5, G); line(L, 895.5, R, 895.5, '#008000');
line(551.5, 286, 551.5, 326, G); line(551.5, 807, 551.5, 845, G);
line(562, 857.5, 597, 857.5, G); line(1524, 857.5, 1560, 857.5, G);
[288, 293, 315, 324, 809, 818, 841, 845].forEach(y => line(549, y - 3, 554, y + 3, G));
[564, 568, 586, 595, 1525, 1535, 1553, 1558].forEach(x => line(x - 2, 860, x + 2, 855, G));
xs.forEach(x => line(x - 3, 871, x + 3, 866, G));
ys.forEach(y => line(538, y - 3, 543, y + 3, G));
[L, R].forEach(x => line(x - 3, 898, x + 3, 893, G));

xs.forEach((x, k) => { bubble(x, 935, k + 1); if (k < 9) text('6000', x + 54, 882); });
'EDCBA'.split('').forEach((s, k) => bubble(507, ys[k], s));
text('54000', 1061, 909);
[361.5, 498.5, 635.5, 772.5].forEach(y => text('7500', 526.5, y, 1));
text('30000', 499, 567, 1);
[['300', 291], ['1200', 304], ['500', 319], ['500', 815], ['1200', 829], ['300', 843]].forEach(t => text(t[0], 537.5, t[1], 1));
[['250', 566], ['1000', 578], ['500', 591], ['500', 1531], ['1000', 1544], ['250', 1555]].forEach(t => text(t[0], t[1], 871));
document.getElementById('plan').innerHTML = out.join('');
```
